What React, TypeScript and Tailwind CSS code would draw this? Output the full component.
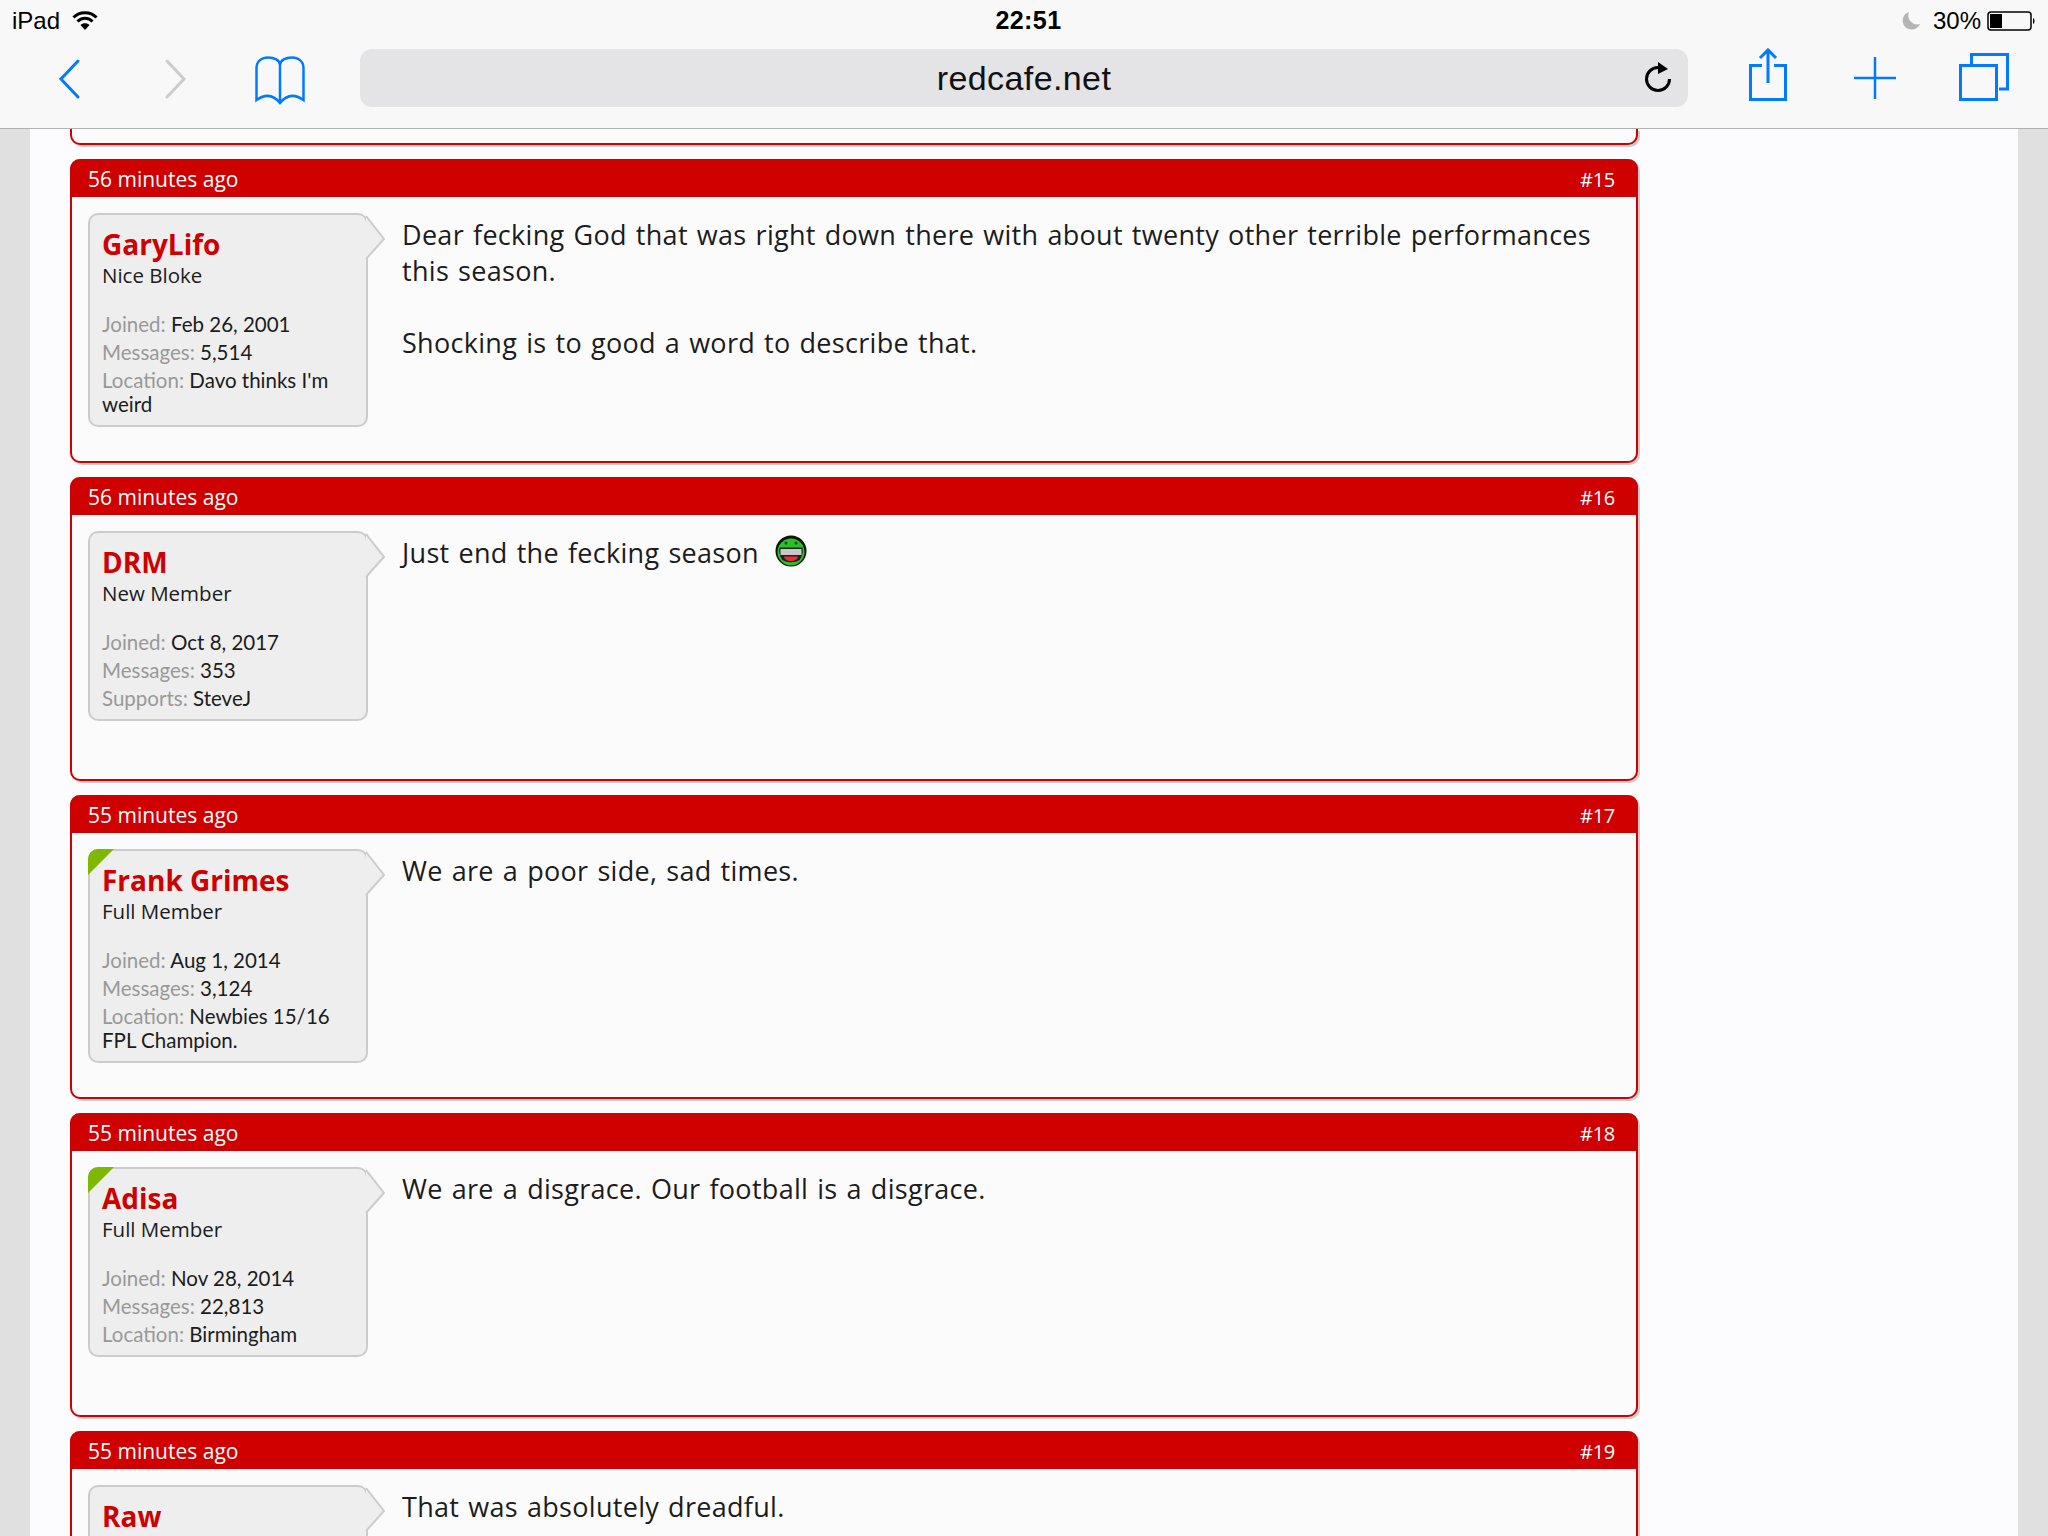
const body = '"Open Sans", sans-serif'

interface Stat {
  label: string
  value: string
}

interface PostData {
  time: string
  num: string
  name: string
  title: string
  stats: Stat[]
  isNew?: boolean
  children: React.ReactNode
}

function Smiley() {
  return (
    <svg width="32" height="34" viewBox="0 0 32 34" className="relative -top-[2px] ml-[16px] inline-block align-[-7px]">
      <circle cx="16" cy="17" r="15.5" fill="#111" />
      <circle cx="16" cy="18" r="13.5" fill="#2cc02c" />
      <circle cx="11" cy="9" r="1.5" fill="#0a500a" />
      <circle cx="21" cy="9" r="1.5" fill="#0a500a" />
      <path d="M4.5 13.5 H27.5 C28.5 20 26 24 24.5 26 C20 29 12 29 7.5 26 C6 24 3.5 20 4.5 13.5 Z" fill="#222" />
      <rect x="5.5" y="15" width="21" height="6" fill="#c8c8c8" />
      <path d="M9 22.5 H23 C22.5 25.5 19.5 27 16 27 C12.5 27 9.5 25.5 9 22.5 Z" fill="#ee2a3c" />
    </svg>
  )
}

function Post({ time, num, name, title, stats, isNew, children }: PostData) {
  return (
    <article className="mt-[14px] flex h-[304px] flex-shrink-0 flex-col rounded-[10px] border-2 border-t-0 border-[#ce0000] bg-[#fbfbfb] shadow-[2px_2px_0_#ccc]">
      <header className="-mx-[2px] flex h-[38px] flex-shrink-0 items-center justify-between rounded-t-[10px] bg-[#ce0000] pl-[18px] pr-[23px] pt-[3px] text-[21px] text-white">
        <span>{time}</span>
        <span className="text-[20px] tracking-[-0.3px]">{num}</span>
      </header>
      <div className="flex items-start pl-[16px] pt-[16px]">
        <aside className="relative w-[280px] flex-shrink-0 rounded-[10px] border-2 border-[#ccc] bg-[#eee] pb-[5px] pl-[12px] pr-[8px] pt-[13px]">
          {isNew && (
            <span className="absolute -left-[2px] -top-[2px] h-[26px] w-[26px] rounded-tl-[10px] bg-[#7fb800] [clip-path:polygon(0_0,100%_0,0_100%)]" />
          )}
          <svg width="22" height="46" viewBox="0 0 22 46" className="absolute -right-[21px] top-0">
            <path d="M1 1 L19 24 L1 44" fill="#eee" stroke="#ccc" strokeWidth="2" />
          </svg>
          <div className="text-[28px] font-bold leading-[32px] text-[#ce0000]">{name}</div>
          <div className="mt-[1px] text-[20.5px] leading-[28px] text-[#1c1c1c]">{title}</div>
          <div className="mt-[23px] font-['Lato',sans-serif] text-[20.5px] leading-[24px]">
            {stats.map((s) => (
              <div key={s.label} className="mb-[4px] whitespace-pre-line text-[#1c1c1c]">
                <span className="text-[#999]">{s.label}:</span> {s.value}
              </div>
            ))}
          </div>
        </aside>
        <div className="ml-[34px] mt-[4px] whitespace-pre-line text-[27px] leading-[36px] tracking-[0.3px] text-[#1c1c1c] [word-spacing:1.7px]">
          {children}
        </div>
      </div>
    </article>
  )
}

function StatusBar() {
  return (
    <div className="grid h-[40px] grid-cols-3 items-center pl-[12px] pr-[11px] pt-[1px] text-[24px] text-black">
      <div className="flex items-center">
        <span>iPad</span>
        <svg width="26" height="20" viewBox="0 0 26 20" className="ml-[12px]">
          <path d="M13 19 L8.5 14 C11 11.5 15 11.5 17.5 14 Z" fill="#000" />
          <path d="M5.5 10.5 C9.5 6 16.5 6 20.5 10.5" fill="none" stroke="#000" strokeWidth="3" />
          <path d="M1.5 6.5 C7.5 0 18.5 0 24.5 6.5" fill="none" stroke="#000" strokeWidth="3" />
        </svg>
      </div>
      <div className="pl-[8px] text-center text-[25px] font-semibold tracking-[0.4px]">22:51</div>
      <div className="flex items-center justify-end">
        <svg width="20" height="20" viewBox="0 0 20 20">
          <path d="M8 1 A9 9 0 1 0 19 13 A9 9 0 0 1 8 1 Z" fill="#b5b5b5" />
        </svg>
        <span className="ml-[12px] font-light">30%</span>
        <svg width="50" height="20" viewBox="0 0 50 20" className="ml-[6px]">
          <rect x="1" y="1" width="43" height="18" rx="3" fill="none" stroke="#000" strokeWidth="1.5" />
          <rect x="3" y="3" width="12" height="14" fill="#000" />
          <path d="M46 7 C48 7.5 48 12.5 46 13 Z" fill="#000" />
        </svg>
      </div>
    </div>
  )
}

function Toolbar() {
  return (
    <div className="flex h-[88px] items-center pb-[12px] pl-[59px]">
      <svg width="20" height="60" viewBox="0 0 20 60" className="overflow-visible">
        <path d="M19 13 L2 31 L19 49" fill="none" stroke="#007aff" strokeWidth="3" strokeLinecap="round" />
      </svg>
      <svg width="20" height="60" viewBox="0 0 20 60" className="ml-[87px] overflow-visible">
        <path d="M1 13 L18 31 L1 49" fill="none" stroke="#ccc" strokeWidth="3" strokeLinecap="round" />
      </svg>
      <svg width="50" height="60" viewBox="0 0 50 60" className="ml-[69px]">
        <path
          d="M1.5 52 V20 C1.5 13 7 9.5 13 9.5 C19 9.5 25 12 25 17 C25 12 31 9.5 37 9.5 C43 9.5 48.5 13 48.5 20 V52 C40 46 32 46 25 55 C18 46 10 46 1.5 52 Z M25 17 V55"
          fill="none"
          stroke="#007aff"
          strokeWidth="2.5"
        />
      </svg>
      <div className="relative ml-[55px] flex h-[58px] w-[1328px] items-center justify-center rounded-[12px] bg-[#e4e4e6] text-[34px] tracking-[0.4px] text-[#111]">
        redcafe.net
        <svg width="30" height="34" viewBox="0 0 30 34" className="absolute right-[14px] top-[11px]">
          <path d="M14 7.5 A11.5 11.5 0 1 0 25.5 19" fill="none" stroke="#000" strokeWidth="3" />
          <path d="M14 2 L24 9 L14 14 Z" fill="#000" />
        </svg>
      </div>
      <svg width="38" height="60" viewBox="0 0 38 60" className="ml-[61px]">
        <path d="M13 17.5 H1.5 V51.5 H36.5 V17.5 H25 M19 35 V3 M11 10 L19 2 L27 10" fill="none" stroke="#007aff" strokeWidth="3" />
      </svg>
      <svg width="42" height="60" viewBox="0 0 42 60" className="ml-[67px]">
        <path d="M21 9 V51 M0 30 H42" fill="none" stroke="#007aff" strokeWidth="2.5" />
      </svg>
      <svg width="50" height="60" viewBox="0 0 50 60" className="ml-[63px]">
        <path d="M1.5 17.5 H37.5 V51.5 H1.5 Z M12.5 16 V6.5 H48.5 V41 H40" fill="none" stroke="#007aff" strokeWidth="3" />
      </svg>
    </div>
  )
}

const posts: PostData[] = [
  {
    time: '56 minutes ago',
    num: '#15',
    name: 'GaryLifo',
    title: 'Nice Bloke',
    stats: [
      { label: 'Joined', value: 'Feb 26, 2001' },
      { label: 'Messages', value: '5,514' },
      { label: 'Location', value: "Davo thinks I'm\nweird" },
    ],
    children: 'Dear fecking God that was right down there with about twenty other terrible performances\nthis season.\n\nShocking is to good a word to describe that.',
  },
  {
    time: '56 minutes ago',
    num: '#16',
    name: 'DRM',
    title: 'New Member',
    stats: [
      { label: 'Joined', value: 'Oct 8, 2017' },
      { label: 'Messages', value: '353' },
      { label: 'Supports', value: 'SteveJ' },
    ],
    children: (
      <>
        Just end the fecking season
        <Smiley />
      </>
    ),
  },
  {
    time: '55 minutes ago',
    num: '#17',
    name: 'Frank Grimes',
    title: 'Full Member',
    isNew: true,
    stats: [
      { label: 'Joined', value: 'Aug 1, 2014' },
      { label: 'Messages', value: '3,124' },
      { label: 'Location', value: 'Newbies 15/16\nFPL Champion.' },
    ],
    children: 'We are a poor side, sad times.',
  },
  {
    time: '55 minutes ago',
    num: '#18',
    name: 'Adisa',
    title: 'Full Member',
    isNew: true,
    stats: [
      { label: 'Joined', value: 'Nov 28, 2014' },
      { label: 'Messages', value: '22,813' },
      { label: 'Location', value: 'Birmingham' },
    ],
    children: 'We are a disgrace. Our football is a disgrace.',
  },
  {
    time: '55 minutes ago',
    num: '#19',
    name: 'Raw',
    title: 'Full Member',
    stats: [],
    children: 'That was absolutely dreadful.',
  },
]

export default function App() {
  return (
    <div className="flex h-[1536px] flex-col overflow-hidden bg-[#e0e0e0]" style={{ fontFamily: body }}>
      <nav className="flex-shrink-0 border-b border-[#b2b2b2] bg-[#f8f8f8]" style={{ fontFamily: '"Liberation Sans", sans-serif' }}>
        <StatusBar />
        <Toolbar />
      </nav>
      <main className="mx-[30px] flex min-h-0 flex-1 flex-col overflow-hidden bg-[#fcfcff] pl-[40px] pr-[380px]">
        <div className="h-[16px] flex-shrink-0 rounded-b-[10px] border-2 border-t-0 border-[#ce0000] bg-[#fbfbfb] shadow-[2px_2px_0_#ccc]" />
        {posts.map((p) => (
          <Post key={p.num} {...p} />
        ))}
      </main>
    </div>
  )
}
